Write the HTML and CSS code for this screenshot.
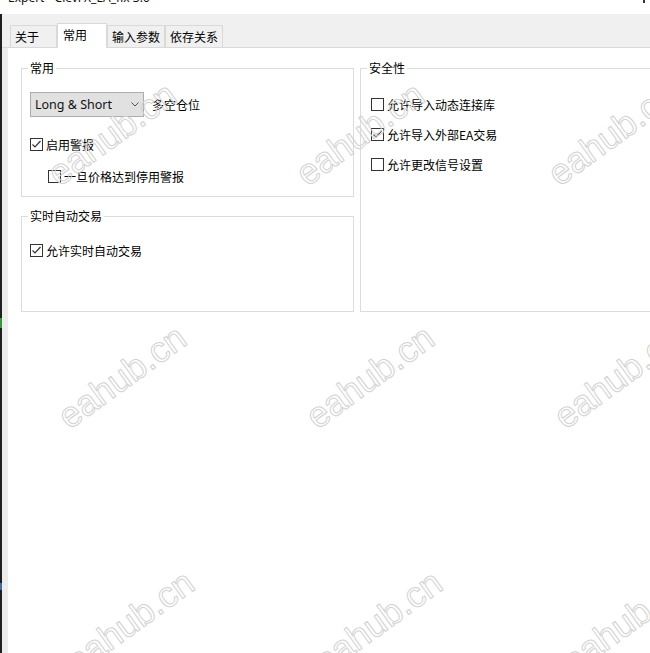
FILE: index.html
```html
<!DOCTYPE html>
<html>
<head>
  <meta charset="UTF-8">
  <title>Expert - ClevFX_EA_fix 3.0</title>
  <link rel="stylesheet" href="styles.css">
</head>
<body>
  <div class="window">
    <div class="titlebar">
      <span class="title">Expert - ClevFX_EA_fix 3.0</span>
      <span class="close-dot"></span>
    </div>

    <div class="frame">
      <div class="edge"><i class="edge-mark"></i><i class="edge-mark blue"></i></div>

      <div class="dialog">
        <div class="tabs">
          <div class="tab tab-first">关于</div>
          <div class="tab active">常用</div>
          <div class="tab">输入参数</div>
          <div class="tab">依存关系</div>
        </div>

        <div class="panel">
          <div class="col">
            <fieldset class="group group-common">
              <legend>常用</legend>
              <div class="row-select">
                <div class="select">
                  <span>Long &amp; Short</span>
                  <svg class="chevron" width="8" height="5" viewBox="0 0 8 5"><path d="M0.5 0.5 L4 4 L7.5 0.5" fill="none" stroke="#555" stroke-width="1"/></svg>
                </div>
                <span class="select-label">多空仓位</span>
              </div>
              <label class="check first">
                <span class="box"><svg width="11" height="11" viewBox="0 0 11 11"><path d="M1.5 5.5 L4 8 L9.5 2" fill="none" stroke="#333" stroke-width="1.2"/></svg></span>
                启用警报
              </label>
              <label class="check indent">
                <span class="box"></span>
                一旦价格达到停用警报
              </label>
            </fieldset>

            <fieldset class="group group-live">
              <legend>实时自动交易</legend>
              <label class="check first">
                <span class="box"><svg width="11" height="11" viewBox="0 0 11 11"><path d="M1.5 5.5 L4 8 L9.5 2" fill="none" stroke="#333" stroke-width="1.2"/></svg></span>
                允许实时自动交易
              </label>
            </fieldset>
          </div>

          <fieldset class="group group-security">
            <legend>安全性</legend>
            <label class="check first">
              <span class="box"></span>
              允许导入动态连接库
            </label>
            <label class="check">
              <span class="box"><svg width="11" height="11" viewBox="0 0 11 11"><path d="M1.5 5.5 L4 8 L9.5 2" fill="none" stroke="#333" stroke-width="1.2"/></svg></span>
              允许导入外部EA交易
            </label>
            <label class="check">
              <span class="box"></span>
              允许更改信号设置
            </label>
          </fieldset>
        </div>
      </div>
    </div>

    <!-- 水印 -->
    <div class="watermarks">
      <span class="wm" style="left:112px;top:134px">eahub.cn</span>
      <span class="wm" style="left:360px;top:134px">eahub.cn</span>
      <span class="wm" style="left:612px;top:134px">eahub.cn</span>
      <span class="wm" style="left:122px;top:377px">eahub.cn</span>
      <span class="wm" style="left:370px;top:377px">eahub.cn</span>
      <span class="wm" style="left:618px;top:377px">eahub.cn</span>
      <span class="wm" style="left:130px;top:622px">eahub.cn</span>
      <span class="wm" style="left:378px;top:622px">eahub.cn</span>
      <span class="wm" style="left:626px;top:622px">eahub.cn</span>
    </div>
  </div>
</body>
</html>
```

FILE: styles.css
```css
body {
  margin: 0;
  font-family: "Noto Sans CJK SC", "Noto Sans", sans-serif;
  font-size: 12px;
  color: #000;
  background: #fff;
  overflow: hidden;
}
.window {
  position: relative;
  width: 650px;
  height: 653px;
  overflow: hidden;
  background: #fff;
}

/* 标题栏 (只露出底部) */
.titlebar {
  height: 14px;
  overflow: hidden;
  position: relative;
}
.title {
  display: block;
  margin: -9px 0 0 8px;
  font-family: "Noto Sans", "Liberation Sans", sans-serif;
  font-size: 12px;
  line-height: 14px;
  color: #111;
}
.close-dot {
  position: absolute;
  left: 643px;
  top: 0;
  width: 2px;
  height: 3px;
  background: #333;
}

.frame {
  display: flex;
  height: 639px;
}
.edge {
  position: relative;
  width: 2px;
  flex: none;
  background: #1f1f1f;
}
.edge-mark {
  position: absolute;
  left: 0;
  top: 304px;
  width: 2px;
  height: 10px;
  background: #2e9a3a;
}
.edge-mark.blue {
  top: 569px;
  height: 7px;
  background: #3a6ea5;
}
.dialog {
  flex: 1;
  min-width: 0;
  overflow: hidden;
  display: flex;
  flex-direction: column;
}

/* 选项卡 */
.tabs {
  display: flex;
  align-items: flex-end;
  height: 33px;
  padding-left: 8px;
  background: #f0f0f0;
  border-bottom: 1px solid #d9d9d9;
}
.tab {
  height: 21px;
  padding: 0 4px;
  line-height: 21px;
  border: 1px solid #d9d9d9;
  border-bottom: none;
  background: #f0f0f0;
  white-space: nowrap;
}
.tab-first {
  min-width: 37px;
}
.tab.active {
  position: relative;
  height: 24px;
  min-width: 38px;
  padding: 0 5px;
  margin-bottom: -1px;
  background: #fff;
}

.panel {
  flex: 1;
  display: grid;
  grid-template-columns: 333px 333px;
  column-gap: 6px;
  align-content: start;
  align-items: start;
  padding: 12px 0 0 13px;
  border-left: 6px solid #ececec;
  background: #fff;
}

/* 分组框 */
.group {
  margin: 0;
  padding: 0 6px;
  border: 1px solid #dcdcdc;
  min-width: 0;
}
.group legend {
  padding: 0 2px;
  line-height: 16px;
}
.group-common {
  padding-bottom: 12px;
}
.group-live {
  margin-top: 11px;
  padding-bottom: 53px;
}
.group-security {
  align-self: stretch;
}

.row-select {
  display: flex;
  align-items: center;
  margin: 16px 0 0 2px;
}
.select {
  box-sizing: border-box;
  width: 114px;
  height: 25px;
  display: flex;
  align-items: center;
  justify-content: space-between;
  padding: 0 4px 0 4px;
  background: #e1e1e1;
  border: 1px solid #adadad;
  font-family: "Noto Sans", "Open Sans", sans-serif;
  font-size: 12.5px;
  color: #111;
}
.select-label {
  margin-left: 8px;
}

.check {
  display: flex;
  align-items: center;
  height: 16px;
  margin: 14px 0 0 2px;
  white-space: nowrap;
}
.check.first {
  margin-top: 19px;
}
.group-common .check.indent {
  margin-top: 16px;
  margin-left: 20px;
}
.group-live .check.first {
  margin-top: 18px;
}
.group-security .check {
  margin-left: 4px;
}
.group-security .check.first {
  margin-top: 20px;
}
.box {
  box-sizing: border-box;
  width: 13px;
  height: 13px;
  margin-right: 3px;
  border: 1px solid #333;
  background: #fff;
  display: flex;
  align-items: center;
  justify-content: center;
  flex: none;
}

/* 水印层 */
.watermarks {
  position: absolute;
  inset: 0;
  pointer-events: none;
}
.wm {
  position: absolute;
  transform: translate(-50%, -50%) rotate(-36deg);
  font-family: "Liberation Sans", Arial, sans-serif;
  font-size: 36px;
  line-height: 1;
  color: transparent;
  -webkit-text-stroke: 1px #d2d2d2;
  white-space: nowrap;
}
```
